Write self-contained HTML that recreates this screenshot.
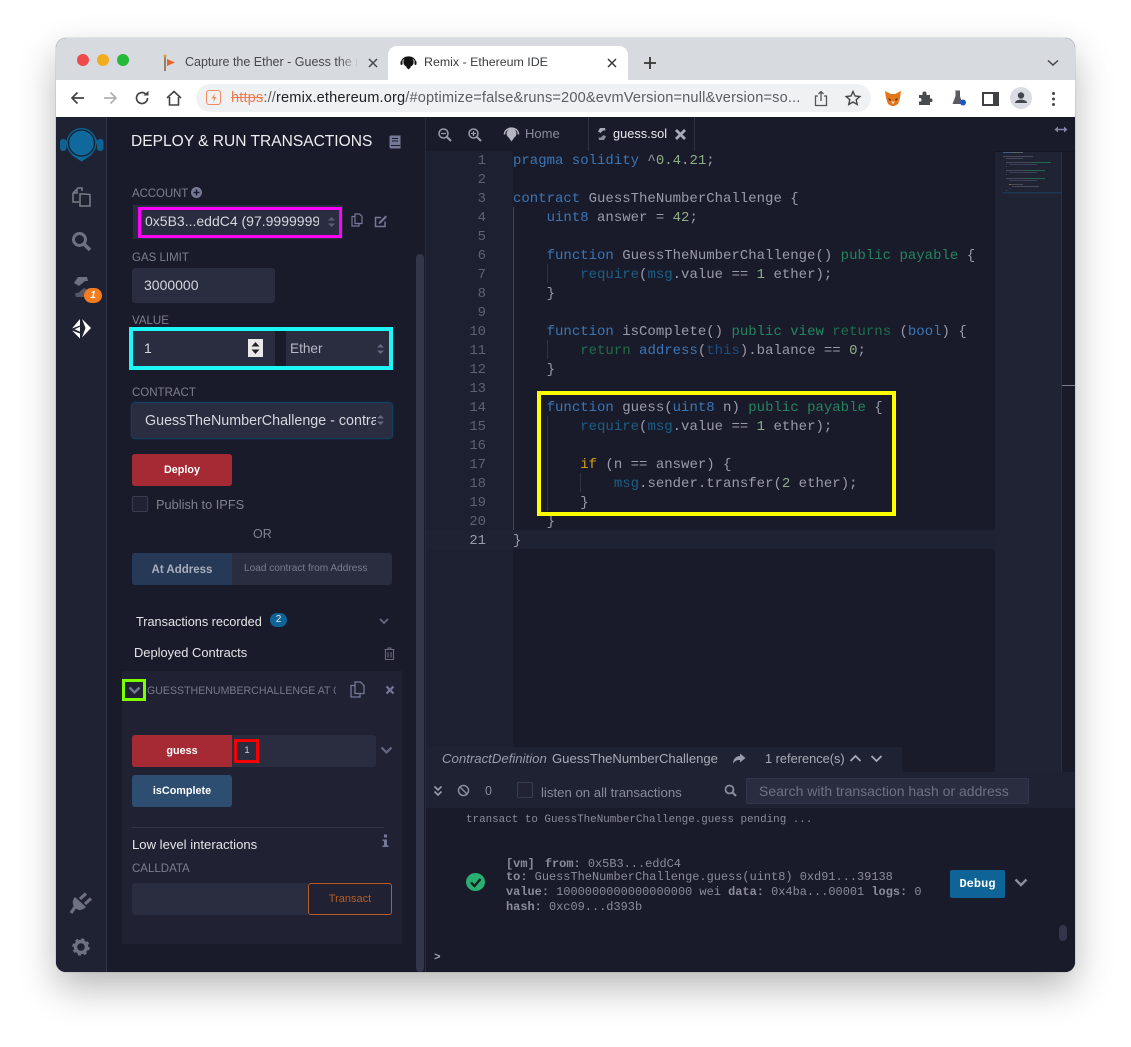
<!DOCTYPE html>
<html><head><meta charset="utf-8"><style>
html,body{margin:0;padding:0;background:#fff;width:1131px;height:1047px;overflow:hidden}
body{font-family:"Liberation Sans",sans-serif;position:relative}
.a{position:absolute;white-space:pre}
svg{position:absolute;overflow:visible}
#win{position:absolute;left:56px;top:38px;width:1019px;height:934px;border-radius:10px;overflow:hidden;background:#1a1b2a;box-shadow:0 0 1px rgba(0,0,0,.45),0 16px 38px rgba(0,0,0,.28)}
#root{position:absolute;left:-56px;top:-38px;width:1131px;height:1047px}
.lab{font-size:11.5px;color:#7d7e90}
.inp{position:absolute;background:#2a2c3f;border-radius:3px}
.btn{position:absolute;border-radius:3px;color:#fff;text-align:center;font-weight:bold;font-size:10.8px}
.ln{position:absolute;left:440px;width:46px;margin-top:1px;text-align:right;font:13.9px/19px "Liberation Mono",monospace;color:#5f6170}
.c{position:absolute;left:513px;margin-top:1px;font:14px/19px "Liberation Mono",monospace;color:#999aab;white-space:pre}
.k{color:#3a76b6}.g{color:#23855f}.d{color:#1f6e4c}.r{color:#1b5f85}.u{color:#1b4d80}.n{color:#8fae87}.y{color:#d39a15}
.box{position:absolute;box-sizing:border-box;background:transparent}
.t{font:bold 11.950px/14.500px "Liberation Mono",monospace;color:#8a8b9c;white-space:pre;position:absolute}
.t i{font-style:normal;font-weight:normal}
</style></head><body>
<div id="win"><div id="root">

<!-- chrome -->
<div class="a" style="left:56px;top:38px;width:1019px;height:42px;background:#d7dade"></div>
<div class="a" style="left:56px;top:80px;width:1019px;height:37px;background:#fff"></div>
<div class="a" style="left:77px;top:54px;width:12px;height:12px;border-radius:50%;background:#ee4b4c"></div>
<div class="a" style="left:97px;top:54px;width:12px;height:12px;border-radius:50%;background:#f0ae1f"></div>
<div class="a" style="left:117px;top:54px;width:12px;height:12px;border-radius:50%;background:#25b93a"></div>
<svg style="left:160px;top:53px" width="18" height="20"><path d="M5 3V18" stroke="#8a6a3a" stroke-width="1.600"/><path d="M7 6L15 9.500L7 13Z" fill="#e8622a"/><circle cx="5" cy="3" r="1.500" fill="#d8a040"/></svg>
<div class="a" style="left:185px;top:55px;font-size:12.500px;line-height:15px;color:#45474b;width:172px;overflow:hidden">Capture the Ether - Guess the number</div>
<div class="a" style="left:338px;top:50px;width:22px;height:24px;background:linear-gradient(90deg,rgba(215,218,222,0),#d7dade)"></div>
<svg style="left:367px;top:57px" width="12" height="12"><path d="M2 2L10 10M10 2L2 10" stroke="#45474b" stroke-width="1.500"/></svg>
<div class="a" style="left:388px;top:46px;width:240px;height:34px;background:#fff;border-radius:9px 9px 0 0"></div>
<svg style="left:400px;top:54px" width="18" height="18"><circle cx="8.500" cy="8" r="5.200" fill="#111"/><path d="M1.500 9C1.500 1 15.500 1 15.500 9" stroke="#111" stroke-width="1.200" fill="none"/><rect x="0.500" y="7" width="2" height="4" rx="1" fill="#111"/><rect x="14.500" y="7" width="2" height="4" rx="1" fill="#111"/><path d="M6 13L8.500 15.500L11 13Z" fill="#111"/></svg>
<div class="a" style="left:424px;top:55px;font-size:12.400px;line-height:15px;color:#3a3b3e">Remix - Ethereum IDE</div>
<svg style="left:606px;top:57px" width="12" height="12"><path d="M2 2L10 10M10 2L2 10" stroke="#3a3b3e" stroke-width="1.500"/></svg>
<svg style="left:643px;top:56px" width="14" height="14"><path d="M7 1V13M1 7H13" stroke="#333" stroke-width="1.800"/></svg>
<svg style="left:1047px;top:59px" width="12" height="8"><path d="M1 1.500L6 6L11 1.500" stroke="#444" stroke-width="1.500" fill="none"/></svg>
<!-- toolbar -->
<svg style="left:70px;top:90px" width="16" height="16"><path d="M14 8H2M7.500 2.500L2 8L7.500 13.500" stroke="#444" stroke-width="1.700" fill="none"/></svg>
<svg style="left:102px;top:90px" width="16" height="16"><path d="M2 8H14M8.500 2.500L14 8L8.500 13.500" stroke="#b0b0b0" stroke-width="1.700" fill="none"/></svg>
<svg style="left:134px;top:90px" width="16" height="16"><path d="M13.500 8A5.500 5.500 0 1 1 11.500 3.800" stroke="#444" stroke-width="1.700" fill="none"/><path d="M9.500 5.500H14.500V0.800Z" fill="#444"/></svg>
<svg style="left:165px;top:89px" width="18" height="18"><path d="M2 9L9 2.500L16 9M4.500 8V16H13.500V8" stroke="#444" stroke-width="1.600" fill="none"/></svg>
<div class="a" style="left:196px;top:84px;width:675px;height:28px;background:#f0f1f3;border-radius:14px"></div>
<div class="a" style="left:206px;top:90px;width:13px;height:13px;border:1.500px solid #ef8a60;border-radius:3px"></div>
<svg style="left:206px;top:90px" width="16" height="16"><path d="M9 3L5.500 8.500H8L7 12.500L10.500 7H8Z" fill="#ef8a60"/></svg>
<div class="a" style="left:231px;top:89px;font-size:14.600px;line-height:18px;color:#5b5d61;letter-spacing:.15px"><span style="color:#ef7a50;text-decoration:line-through">https</span>://<span style="color:#202124">remix.ethereum.org</span>/#optimize=false&amp;runs=200&amp;evmVersion=null&amp;version=so...</div>
<svg style="left:814px;top:90px" width="14" height="17"><path d="M4 6H1.500V15.500H12.500V6H10M7 11V1.500M4.500 4L7 1.500L9.500 4" stroke="#555" stroke-width="1.300" fill="none"/></svg>
<svg style="left:845px;top:90px" width="16" height="16"><path d="M8 1.500L10 6L14.800 6.500L11.200 9.700L12.200 14.500L8 12L3.800 14.500L4.800 9.700L1.200 6.500L6 6Z" stroke="#444" stroke-width="1.400" fill="none"/></svg>
<svg style="left:884px;top:90px" width="18" height="17"><path d="M1 1L7 4H11L17 1L16 8L14 14L10.500 16H7.500L4 14L2 8Z" fill="#e2761b"/><path d="M7 11L9 14L11 11L9 12Z" fill="#fff"/><path d="M4 8L7 9.500L6 11ZM14 8L11 9.500L12 11Z" fill="#3a2a1c"/></svg>
<svg style="left:917px;top:90px" width="16" height="16"><path d="M2 5H5.500V3.500A2 2 0 0 1 9.500 3.500V5H13V8.500H14.500A2 2 0 0 1 14.500 12H13V15H2V11.500H3.500A2 2 0 0 0 3.500 8H2Z" fill="#4a4b4d"/></svg>
<svg style="left:950px;top:89px" width="18" height="18"><path d="M5 1.500H10V7L12 13.500V15H2.500L5.500 7V2Z" fill="#5a5b5e"/><circle cx="13" cy="13.500" r="3" fill="#1a56c8"/></svg>
<div class="a" style="left:982px;top:92px;width:9px;height:10px;border:2.500px solid #404144;border-right-width:6px;background:#fff"></div>
<div class="a" style="left:1010px;top:87px;width:22px;height:22px;border-radius:50%;background:#dadce4"></div>
<svg style="left:1010px;top:87px" width="22" height="22"><circle cx="11" cy="8.500" r="3.200" fill="#44464e"/><path d="M5 16C5 11.500 17 11.500 17 16Z" fill="#44464e"/></svg>
<div class="a" style="left:1052px;top:92px;width:3px;height:3px;border-radius:50%;background:#444;box-shadow:0 5.500px 0 #444,0 11px 0 #444"></div>

<!-- icon panel -->
<div class="a" style="left:56px;top:117px;width:51px;height:855px;background:#1f2233;border-right:1px solid #33364a;box-sizing:border-box"></div>
<svg style="left:56px;top:117px" width="50" height="48">
<path d="M11 27A15.500 15.500 0 0 1 41 27" stroke="#0d6494" stroke-width="3" fill="none"/>
<rect x="4" y="22" width="6.500" height="12" rx="3" fill="#0d6494"/><rect x="41" y="22" width="6.500" height="12" rx="3" fill="#0d6494"/>
<circle cx="25.500" cy="26" r="15" fill="#0d6494"/><circle cx="25.500" cy="26" r="13" fill="#0f699c" stroke="#14202f" stroke-width="1.300"/>
<path d="M14 37L25.500 41L37 37L25.500 44.500Z" fill="#0f699c"/></svg>
<svg style="left:71px;top:186px" width="22" height="22"><path d="M2 7L7 2H11V5M2 7V16H8M2 7H6V4" stroke="#7b7c88" stroke-width="1.500" fill="none"/><path d="M9 8H14L19 8.500V20H9Z" stroke="#7b7c88" stroke-width="1.500" fill="none"/></svg>
<svg style="left:71px;top:231px" width="22" height="22"><circle cx="8.500" cy="8.500" r="6" stroke="#6f7080" stroke-width="3" fill="none"/><path d="M13 13L19 19" stroke="#6f7080" stroke-width="3.500"/></svg>
<svg style="left:72px;top:275px" width="20" height="24"><path d="M15 2L6 2L2 8L7 11L13 6H16Z" fill="#6f7080"/><path d="M4 22L13 22L17 16L12 13L6 18H3Z" fill="#56576a"/></svg>
<div class="a" style="left:84px;top:288px;width:18px;height:15px;border-radius:8px;background:#f47c20;color:#fff;font:italic bold 10px/15px 'Liberation Sans',sans-serif;text-align:center">1</div>
<svg style="left:71px;top:318px" width="21" height="22"><path d="M9 1L1 10.500L9 7.500ZM1 12.500L9 20.500V15.500ZM9 8.800L3.500 11.300L9 13.800ZM11 1L20 10L11 19.500L14.500 10Z" fill="#fff"/></svg>
<svg style="left:60px;top:880px" width="40" height="40"><path d="M15 17L26 27C22 31 17.500 30.500 15 28C12 25 12 20 15 17Z" fill="#6f7080"/><path d="M20 19L26 13.500M25 24L31 18.500" stroke="#6f7080" stroke-width="3.200"/><path d="M15 27L11 33" stroke="#6f7080" stroke-width="3.200"/></svg>
<svg style="left:72px;top:938px" width="18" height="18"><circle cx="9" cy="9" r="5.500" stroke="#6f7080" stroke-width="3.500" fill="none"/><circle cx="9" cy="9" r="7.500" stroke="#6f7080" stroke-width="2.500" stroke-dasharray="3 2.900" fill="none"/></svg>

<!-- side panel -->
<div class="a" style="left:107px;top:117px;width:318px;height:855px;background:#1a1b2a"></div>
<div class="a" style="left:425px;top:117px;width:1px;height:855px;background:#2a2c3e"></div>
<div class="a" style="left:416px;top:254px;width:8px;height:718px;background:#33364a;border-radius:4px"></div>
<div class="a" style="left:131px;top:132px;font-size:15.550px;line-height:20px;color:#eceef2">DEPLOY &amp; RUN TRANSACTIONS</div>
<svg style="left:389px;top:135px" width="12" height="14"><path d="M2 0.500H11.500V13.500H2A1.500 1.500 0 0 1 0.500 12V2A1.500 1.500 0 0 1 2 0.500Z" fill="#757896"/><path d="M3 3.500H9M3 6H9M2 10.500H11" stroke="#1a1b2a" stroke-width="1"/></svg>

<div class="a lab" style="left:132px;top:188px;letter-spacing:-.1px">ACCOUNT</div>
<div class="a" style="left:191px;top:187px;width:11px;height:11px;border-radius:50%;background:#757896"></div>
<svg style="left:191px;top:187px" width="11" height="11"><path d="M5.500 2.500V8.500M2.500 5.500H8.500" stroke="#1a1b2a" stroke-width="1.500"/></svg>
<div class="inp" style="left:133px;top:205px;width:210px;height:34px;border-radius:0"></div>
<div class="a" style="left:145px;top:212px;width:174px;overflow:hidden;font-size:14px;line-height:18px;color:#d5d6de">0x5B3...eddC4 (97.9999999999)</div>
<svg style="left:327px;top:216px" width="9" height="12"><path d="M1 4.500L4.500 1L8 4.500ZM1 7.500L4.500 11L8 7.500Z" fill="#5c5e76"/></svg>
<svg style="left:351px;top:213px" width="12" height="14"><path d="M4 1H8.500L11 3.500V10.500H4ZM4 3.500H1V13H8V10.500" stroke="#757896" stroke-width="1.200" fill="none"/></svg>
<svg style="left:374px;top:214px" width="14" height="14"><path d="M11 7.500V12.500H1.500V3.500H7" stroke="#757896" stroke-width="1.500" fill="none"/><path d="M5 8L11.500 1.500L13 3L6.500 9.500L4.500 10Z" fill="#757896"/></svg>
<div class="box" style="left:138px;top:207px;width:204px;height:31px;border:3.500px solid #ff00ff"></div>

<div class="a lab" style="left:132px;top:252px">GAS LIMIT</div>
<div class="inp" style="left:132px;top:268px;width:143px;height:35px"></div>
<div class="a" style="left:144px;top:276px;font-size:14px;line-height:18px;color:#d5d6de">3000000</div>

<div class="a lab" style="left:132px;top:315px">VALUE</div>
<div class="inp" style="left:132px;top:331px;width:143px;height:35px;border-radius:0"></div>
<div class="inp" style="left:286px;top:331px;width:104px;height:35px;border-radius:0"></div>
<div class="a" style="left:144px;top:339px;font-size:14px;line-height:18px;color:#d5d6de">1</div>
<div class="a" style="left:248px;top:339px;width:15px;height:18px;background:#e9e9ec"></div>
<svg style="left:248px;top:339px" width="15" height="18"><path d="M3.500 7.500L7.500 3L11.500 7.500ZM3.500 10.500L7.500 15L11.500 10.500Z" fill="#222"/></svg>
<div class="a" style="left:290px;top:340px;font-size:13.600px;line-height:18px;color:#b8b9c6">Ether</div>
<svg style="left:376px;top:343px" width="9" height="12"><path d="M1 4.500L4.500 1L8 4.500ZM1 7.500L4.500 11L8 7.500Z" fill="#666880"/></svg>
<div class="box" style="left:129px;top:327px;width:264px;height:43px;border:4px solid #1ef7f7"></div>

<div class="a lab" style="left:132px;top:387px">CONTRACT</div>
<div class="inp" style="left:132px;top:403px;width:260px;height:35px;box-shadow:0 0 0 1px #12405e,0 0 3px #12506f"></div>
<div class="a" style="left:145px;top:412px;width:231px;overflow:hidden;font-size:14.300px;line-height:18px;color:#d5d6de">GuessTheNumberChallenge - contract</div>
<svg style="left:376px;top:414px" width="9" height="12"><path d="M1 4.500L4.500 1L8 4.500ZM1 7.500L4.500 11L8 7.500Z" fill="#666880"/></svg>
<div class="btn" style="left:132px;top:454px;width:100px;height:32px;line-height:33px;background:#a52a33">Deploy</div>
<div class="a" style="left:132px;top:496px;width:14px;height:14px;border:1px solid #3a3c52;border-radius:2px;background:#212334"></div>
<div class="a" style="left:156px;top:496px;font-size:12.800px;line-height:17px;color:#7f8092">Publish to IPFS</div>
<div class="a" style="left:253px;top:527px;font-size:12.500px;line-height:15px;color:#7f8092">OR</div>
<div class="inp" style="left:132px;top:553px;width:260px;height:32px"></div>
<div class="a" style="left:132px;top:553px;width:100px;height:32px;border-radius:3px 0 0 3px;background:#263a57;color:#a9aebd;font-weight:bold;font-size:11.500px;line-height:35px;text-align:center">At Address</div>
<div class="a" style="left:244px;top:562px;font-size:10.100px;line-height:14px;color:#7c7d8e">Load contract from Address</div>

<div class="a" style="left:136px;top:614px;font-size:12.700px;line-height:17px;color:#e4e5ea">Transactions recorded</div>
<div class="a" style="left:270px;top:613px;width:17px;height:14px;border-radius:7px;background:#0f6497;color:#e8e8ee;font-size:10px;line-height:14px;text-align:center">2</div>
<svg style="left:379px;top:618px" width="10" height="7"><path d="M1 1L5 5L9 1" stroke="#666880" stroke-width="1.800" fill="none"/></svg>
<div class="a" style="left:134px;top:644px;font-size:12.900px;line-height:17px;color:#e4e5ea">Deployed Contracts</div>
<svg style="left:384px;top:647px" width="11" height="13"><path d="M0.500 2.500H10.500M4 2.500V1H7V2.500M1.500 3V12.500H9.500V3M4 5V10.500M7 5V10.500" stroke="#666880" stroke-width="1.100" fill="none"/></svg>

<div class="a" style="left:122px;top:671px;width:280px;height:273px;background:#202233"></div>
<div class="box" style="left:122px;top:679px;width:24px;height:22px;border:3px solid #7cff00"></div>
<svg style="left:128px;top:686px" width="13" height="9"><path d="M1.500 1.500L6.500 6.500L11.500 1.500" stroke="#757896" stroke-width="2.300" fill="none"/></svg>
<div class="a" style="left:147px;top:684px;width:189px;overflow:hidden;font-size:10.600px;line-height:14px;color:#777889">GUESSTHENUMBERCHALLENGE AT 0XD91...39138</div>
<svg style="left:350px;top:681px" width="15" height="17"><path d="M5 1H10.500L14 4.500V12.500H5ZM5 4.500H1V16H10V12.500" stroke="#757896" stroke-width="1.300" fill="none"/></svg>
<svg style="left:385px;top:685px" width="10" height="10"><path d="M1.500 1.500L8.500 8.500M8.500 1.500L1.500 8.500" stroke="#757896" stroke-width="2.200"/></svg>

<div class="btn" style="left:132px;top:735px;width:100px;height:32px;line-height:33px;background:#a52a33;border-radius:3px 0 0 3px">guess</div>
<div class="a" style="left:232px;top:735px;width:144px;height:32px;background:#2a2c3f;border-radius:0 3px 3px 0"></div>
<div class="a" style="left:237px;top:743px;width:20px;text-align:center;font-size:9.500px;line-height:16px;color:#cfd0da">1</div>
<div class="box" style="left:234px;top:739px;width:25px;height:24px;border:3px solid #f40000"></div>
<svg style="left:380px;top:746px" width="13" height="9"><path d="M1.500 1.500L6.500 6.500L11.500 1.500" stroke="#666880" stroke-width="2.200" fill="none"/></svg>
<div class="btn" style="left:132px;top:775px;width:100px;height:32px;line-height:33px;background:#2d4e70">isComplete</div>
<div class="a" style="left:132px;top:827px;width:252px;height:1px;background:#34364a"></div>
<div class="a" style="left:132px;top:836px;font-size:13.100px;line-height:17px;color:#e4e5ea">Low level interactions</div>
<svg style="left:382px;top:834px" width="7" height="14"><rect x="2" y="0.500" width="3" height="3" fill="#757896"/><path d="M0.500 5.500H5V11.500H6.500V13H0.500V11.500H2V7H0.500Z" fill="#757896"/></svg>
<div class="a lab" style="left:132px;top:863px">CALLDATA</div>
<div class="inp" style="left:132px;top:883px;width:176px;height:32px;border-radius:3px 0 0 3px"></div>
<div class="a" style="left:308px;top:883px;width:84px;height:32px;box-sizing:border-box;border:1px solid #b75c22;border-radius:3px;color:#b75c22;font-size:11px;line-height:30px;text-align:center">Transact</div>

<!-- editor -->
<div class="a" style="left:426px;top:117px;width:649px;height:855px;background:#1a1b2a"></div>
<svg style="left:438px;top:128px" width="14" height="14"><circle cx="5.500" cy="5.500" r="4.500" stroke="#9a9bab" stroke-width="1.500" fill="none"/><path d="M9 9L13 13" stroke="#9a9bab" stroke-width="2"/><path d="M3 5.500H8" stroke="#9a9bab" stroke-width="1.200"/></svg>
<svg style="left:468px;top:128px" width="14" height="14"><circle cx="5.500" cy="5.500" r="4.500" stroke="#9a9bab" stroke-width="1.500" fill="none"/><path d="M9 9L13 13" stroke="#9a9bab" stroke-width="2"/><path d="M3 5.500H8M5.500 3V8" stroke="#9a9bab" stroke-width="1.200"/></svg>
<svg style="left:503px;top:126px" width="17" height="17"><circle cx="8.500" cy="7.500" r="5" fill="#b4b5c0"/><path d="M1.500 8.500C1.500 0 15.500 0 15.500 8.500" stroke="#b4b5c0" stroke-width="1.500" fill="none"/><path d="M6 12L8.500 15.500L11 12Z" fill="#b4b5c0"/></svg>
<div class="a" style="left:525px;top:126px;font-size:13px;line-height:16px;color:#8b8c9d">Home</div>
<div class="a" style="left:588px;top:117px;width:1px;height:34px;background:#303244"></div>
<div class="a" style="left:694px;top:117px;width:1px;height:34px;background:#303244"></div>
<svg style="left:597px;top:127px" width="10" height="14"><path d="M8 1H3L1 4.500L3.500 6L6 3.500H8.500Z" fill="#a9aab8"/><path d="M2 13H7L9 9.500L6.500 8L4 10.500H1.500Z" fill="#8c8d9e"/></svg>
<div class="a" style="left:613px;top:126px;font-size:12.800px;line-height:16px;color:#e8e9ee">guess.sol</div>
<svg style="left:674px;top:128px" width="13" height="13"><path d="M2 2L11 11M11 2L2 11" stroke="#a9aab8" stroke-width="2.800"/></svg>
<svg style="left:1054px;top:125px" width="14" height="9"><path d="M3 4.500H11" stroke="#8385a8" stroke-width="1.500"/><path d="M0.500 4.500L4 1.500V7.500ZM13.500 4.500L10 1.500V7.500Z" fill="#8385a8"/></svg>

<div class="a" style="left:426px;top:151px;width:87px;height:621px;background:#1d2030"></div>
<div class="a" style="left:513px;top:530px;width:482px;height:19px;background:#1f2232"></div>
<div class="a" style="left:426px;top:530px;width:87px;height:19px;background:#1f2232"></div>
<div class="a" style="left:513px;top:207px;width:1px;height:323px;background:#444655"></div>
<div class="a" style="left:547px;top:264px;width:1px;height:19px;background:#303240"></div>
<div class="a" style="left:547px;top:340px;width:1px;height:19px;background:#303240"></div>
<div class="a" style="left:547px;top:416px;width:1px;height:95px;background:#303240"></div>
<div class="a" style="left:580px;top:473px;width:1px;height:19px;background:#303240"></div>
<div class="a" style="left:995px;top:151px;width:66px;height:621px;background:#202334"></div>
<div class="a" style="left:1061px;top:151px;width:1px;height:621px;background:#2e3040"></div>
<div class="a" style="left:1062px;top:385px;width:13px;height:1px;background:#7c7e90"></div>
<div class="a" style="left:995px;top:151px;width:80px;height:1px;background:#151622"></div>
<!-- minimap -->
<svg style="left:1003px;top:151px" width="58" height="42" opacity=".75">
<g stroke-width="1" fill="none">
<path d="M0 1.500H8" stroke="#4f6f98"/><path d="M8 1.500H20" stroke="#6a7a70"/>
<path d="M0 5.500H30" stroke="#555668"/>
<path d="M3 7.500H20" stroke="#555668"/>
<path d="M3 11.500H28" stroke="#555668"/><path d="M28 11.500H48" stroke="#2a7a5a"/>
<path d="M6 13.500H34" stroke="#445068"/><path d="M3 15.500H4" stroke="#555"/>
<path d="M3 19.500H22" stroke="#555668"/><path d="M22 19.500H42" stroke="#2a7a5a"/>
<path d="M6 21.500H34" stroke="#445068"/><path d="M3 23.500H4" stroke="#555"/>
<path d="M3 27.500H22" stroke="#555668"/><path d="M22 27.500H42" stroke="#2a7a5a"/>
<path d="M6 29.500H34" stroke="#445068"/>
<path d="M6 33.500H8" stroke="#b08a20"/><path d="M8 33.500H20" stroke="#555668"/>
<path d="M9 35.500H36" stroke="#555668"/>
<path d="M6 37.500H7M3 39.500H4" stroke="#555"/>
</g><rect x="0" y="41" width="58" height="1.500" fill="#1c3d5c"/>
</svg>

<!-- code -->
<div class="ln" style="top:151px">1</div><div class="ln" style="top:170px">2</div><div class="ln" style="top:189px">3</div><div class="ln" style="top:208px">4</div><div class="ln" style="top:227px">5</div><div class="ln" style="top:246px">6</div><div class="ln" style="top:265px">7</div><div class="ln" style="top:284px">8</div><div class="ln" style="top:303px">9</div><div class="ln" style="top:322px">10</div><div class="ln" style="top:341px">11</div><div class="ln" style="top:360px">12</div><div class="ln" style="top:379px">13</div><div class="ln" style="top:398px">14</div><div class="ln" style="top:417px">15</div><div class="ln" style="top:436px">16</div><div class="ln" style="top:455px">17</div><div class="ln" style="top:474px">18</div><div class="ln" style="top:493px">19</div><div class="ln" style="top:512px">20</div><div class="ln" style="top:531px;color:#9a9baa">21</div>
<div class="c" style="top:151px"><span class="k">pragma solidity</span> ^<span class="n">0.4.21</span>;</div>
<div class="c" style="top:189px"><span class="k">contract</span> GuessTheNumberChallenge {</div>
<div class="c" style="top:208px">    <span class="k">uint8</span> answer = <span class="n">42</span>;</div>
<div class="c" style="top:246px">    <span class="k">function</span> GuessTheNumberChallenge() <span class="g">public payable</span> {</div>
<div class="c" style="top:265px">        <span class="r">require</span>(<span class="r">msg</span>.value == <span class="n">1</span> ether);</div>
<div class="c" style="top:284px">    }</div>
<div class="c" style="top:322px">    <span class="k">function</span> isComplete() <span class="g">public view</span> <span class="d">returns</span> (<span class="k">bool</span>) {</div>
<div class="c" style="top:341px">        <span class="d">return</span> <span class="k">address</span>(<span class="u">this</span>).balance == <span class="n">0</span>;</div>
<div class="c" style="top:360px">    }</div>
<div class="c" style="top:398px">    <span class="k">function</span> guess(<span class="k">uint8</span> n) <span class="g">public payable</span> {</div>
<div class="c" style="top:417px">        <span class="r">require</span>(<span class="r">msg</span>.value == <span class="n">1</span> ether);</div>
<div class="c" style="top:455px">        <span class="y">if</span> (n == answer) {</div>
<div class="c" style="top:474px">            <span class="r">msg</span>.sender.transfer(<span class="n">2</span> ether);</div>
<div class="c" style="top:493px">        }</div>
<div class="c" style="top:512px">    }</div>
<div class="c" style="top:531px">}</div>
<div class="box" style="left:537px;top:391px;width:359px;height:125px;border:4px solid #ffff00"></div>

<!-- context bar -->
<div class="a" style="left:426px;top:747px;width:476px;height:25px;background:#1f2232"></div>
<div class="a" style="left:902px;top:747px;width:93px;height:25px;background:#1a1b2a"></div>
<div class="a" style="left:442px;top:751px;font-size:13.200px;line-height:15px;color:#9a9bab;font-style:italic">ContractDefinition</div>
<div class="a" style="left:552px;top:751px;font-size:13.100px;line-height:15px;color:#a9aab8">GuessTheNumberChallenge</div>
<svg style="left:732px;top:753px" width="14" height="12"><path d="M8 0.500L13.500 5L8 9.500V7C4.500 7 2.500 8 1 11C1 6 4 3.200 8 3Z" fill="#9a9bab"/></svg>
<div class="a" style="left:765px;top:751px;font-size:12.800px;line-height:15px;color:#a9aab8">1 reference(s)</div>
<svg style="left:849px;top:754px" width="13" height="9"><path d="M1.500 7L6.500 2L11.500 7" stroke="#a9aab8" stroke-width="1.800" fill="none"/></svg>
<svg style="left:870px;top:754px" width="13" height="9"><path d="M1.500 2L6.500 7L11.500 2" stroke="#a9aab8" stroke-width="1.800" fill="none"/></svg>

<!-- terminal bar -->
<div class="a" style="left:426px;top:772px;width:649px;height:36px;background:#1f2232"></div>
<svg style="left:433px;top:785px" width="10" height="12"><path d="M1.500 1.500L5 5L8.500 1.500M1.500 6.500L5 10L8.500 6.500" stroke="#9a9bab" stroke-width="1.600" fill="none"/></svg>
<svg style="left:457px;top:784px" width="13" height="13"><circle cx="6.500" cy="6.500" r="5" stroke="#8a8b9c" stroke-width="1.500" fill="none"/><path d="M3 3L10 10" stroke="#8a8b9c" stroke-width="1.500"/></svg>
<div class="a" style="left:485px;top:784px;font-size:12.500px;line-height:15px;color:#8a8b9c">0</div>
<div class="a" style="left:517px;top:782px;width:14px;height:14px;border:1px solid #3a3c52;border-radius:2px;background:#212334"></div>
<div class="a" style="left:541px;top:785px;font-size:13.200px;line-height:15px;color:#8a8b9c">listen on all transactions</div>
<svg style="left:724px;top:784px" width="13" height="13"><circle cx="5.500" cy="5.500" r="4" stroke="#8a8b9c" stroke-width="1.800" fill="none"/><path d="M8.500 8.500L12 12" stroke="#8a8b9c" stroke-width="2.200"/></svg>
<div class="a" style="left:746px;top:778px;width:283px;height:26px;box-sizing:border-box;background:#2a2c3f;border:1px solid #33354a;border-radius:2px"></div>
<div class="a" style="left:759px;top:783px;font-size:14px;line-height:16px;color:#6f7083">Search with transaction hash or address</div>

<!-- terminal -->
<div class="a" style="left:466px;top:813px;font:10.900px/14px 'Liberation Mono',monospace;color:#8a8b9c">transact to GuessTheNumberChallenge.guess pending ...</div>
<svg style="left:466px;top:873px" width="20" height="18"><ellipse cx="9.500" cy="9" rx="9.500" ry="9" fill="#2aaf72"/><path d="M5 9.500L8.500 13L14.500 6" stroke="#10251e" stroke-width="2.400" fill="none"/></svg>
<div class="t" style="left:506px;top:857px">[vm] <span style="margin-left:3px">from:</span> <i>0x5B3...eddC4</i></div>
<div class="t" style="left:506px;top:870px">to: <i>GuessTheNumberChallenge.guess(uint8) 0xd91...39138</i></div>
<div class="t" style="left:506px;top:885px">value: <i>1000000000000000000 wei</i> data: <i>0x4ba...00001</i> logs: <i>0</i></div>
<div class="t" style="left:506px;top:900px">hash: <i>0xc09...d393b</i></div>
<div class="a" style="left:950px;top:870px;width:55px;height:28px;background:#0f6497;border-radius:2px;color:#fff;font:bold 12px/29px 'Liberation Mono',monospace;text-align:center">Debug</div>
<svg style="left:1014px;top:878px" width="14" height="10"><path d="M1.500 1.500L7 7L12.500 1.500" stroke="#8a8b9c" stroke-width="2.400" fill="none"/></svg>
<div class="a" style="left:1059px;top:925px;width:8px;height:16px;background:#33364a;border-radius:4px"></div>
<div class="a" style="left:434px;top:951px;font:bold 11px/14px 'Liberation Mono',monospace;color:#a9aab8">&gt;</div>
</div></div>
</body></html>
